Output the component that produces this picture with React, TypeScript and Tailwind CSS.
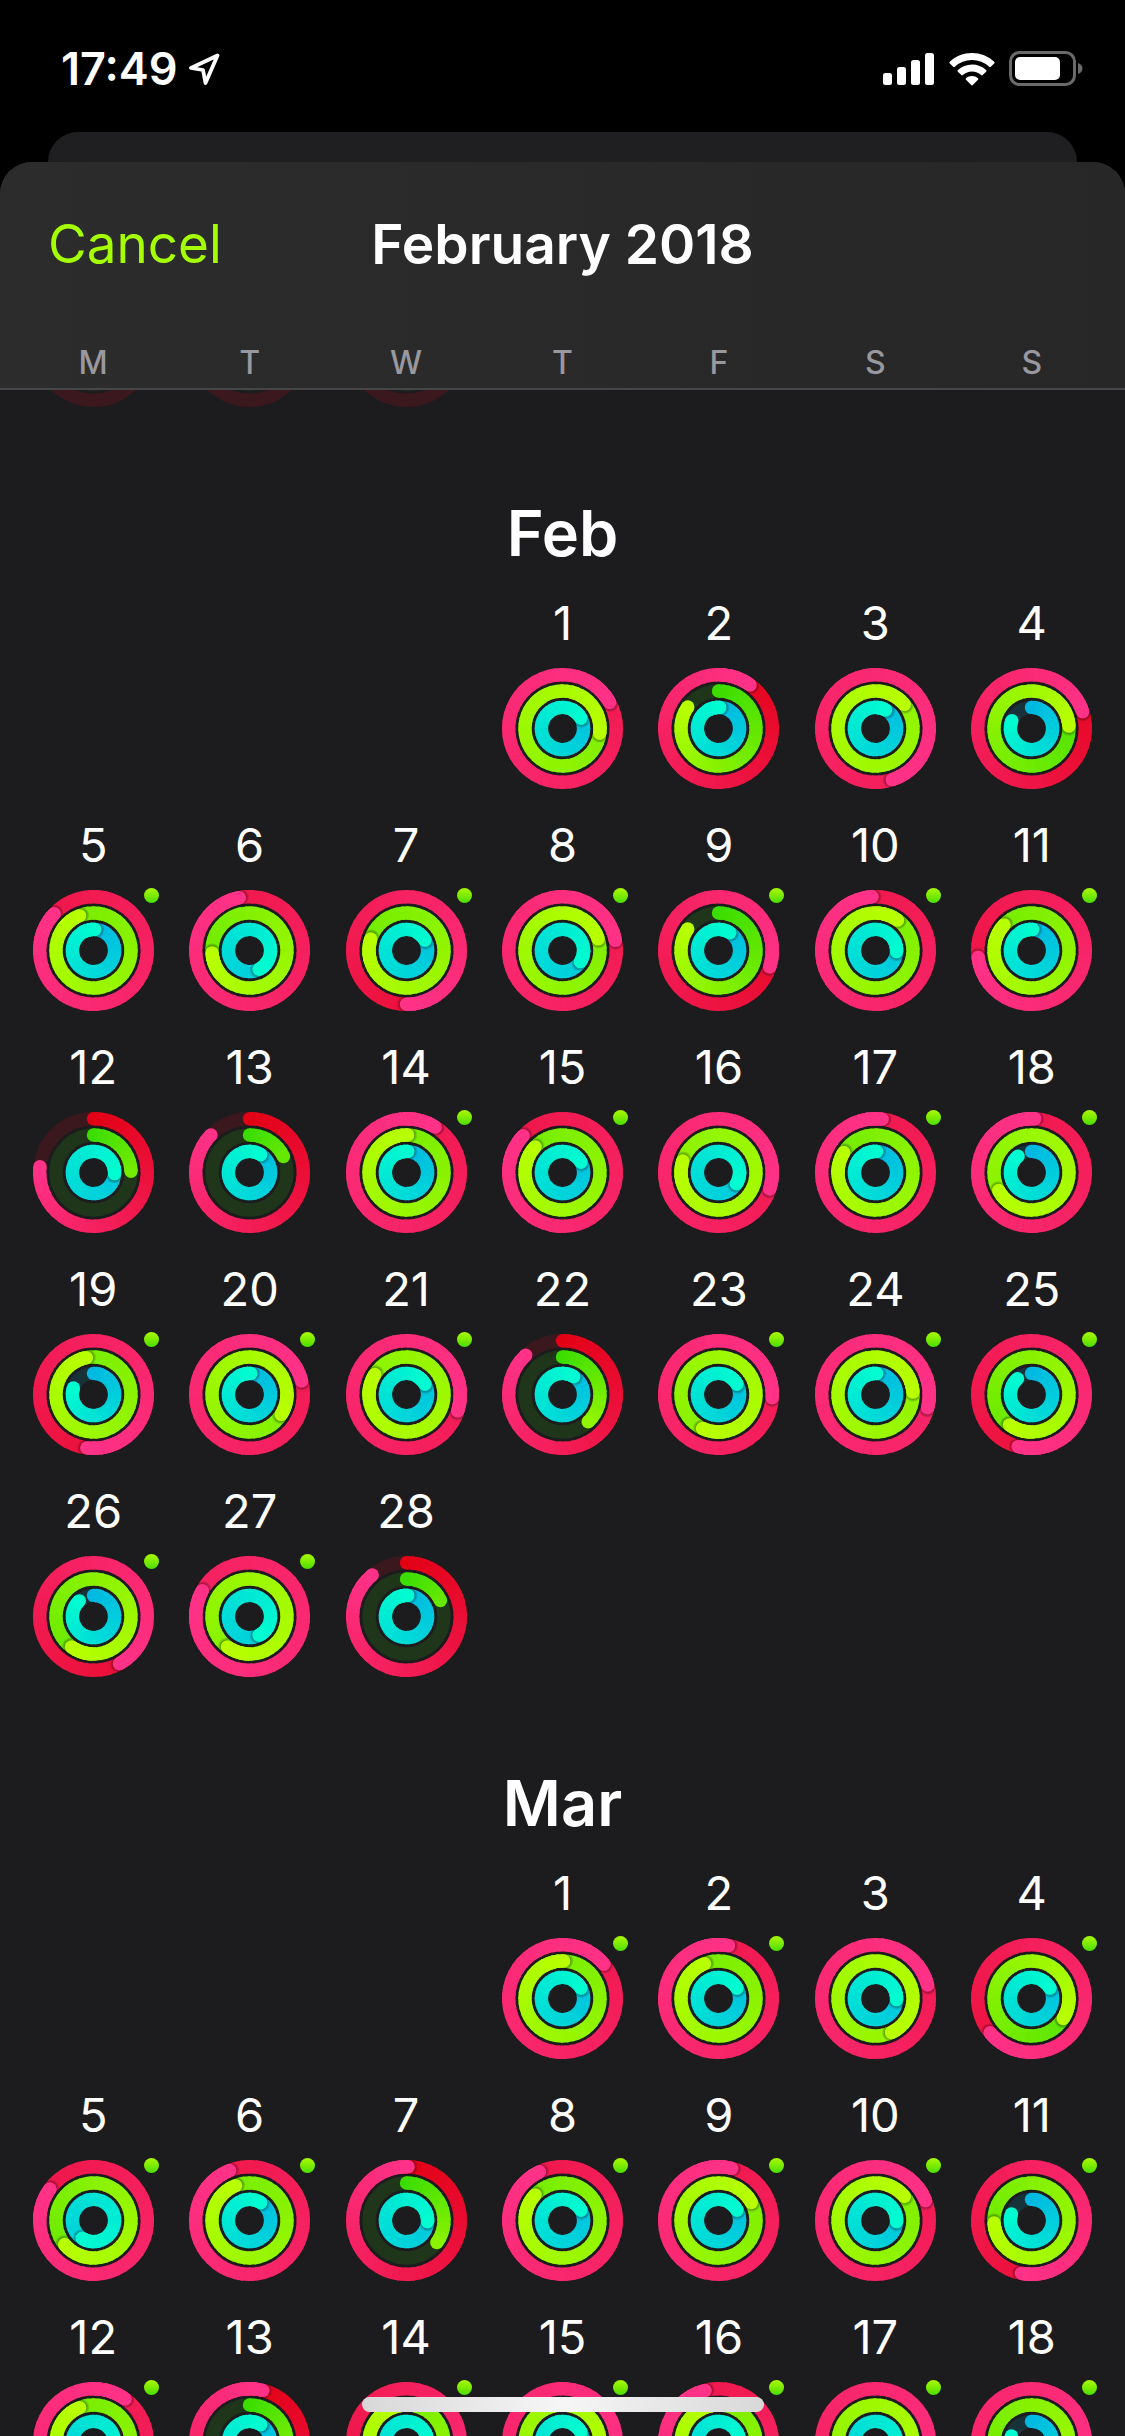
import React from "react";

type Rgb = [number, number, number];

type RingStyle = { radius: number; from: Rgb; to: Rgb; track: string };

/** Completed laps for move, exercise and stand; 1 closes a ring. */
type Day = { move: number; exercise: number; stand: number; workout?: boolean };

type Month = { name: string; days: Day[] };

const STROKE = 13.4;
const CENTER = 60.5;

const MOVE: RingStyle = { radius: 53.8, from: [226, 0, 20], to: [255, 50, 136], track: "#3b181d" };
const EXERCISE: RingStyle = { radius: 37.5, from: [59, 221, 0], to: [184, 255, 0], track: "#20361a" };
const STAND: RingStyle = { radius: 21.1, from: [0, 184, 226], to: [0, 252, 208], track: "#18323a" };

const d = (move: number, exercise: number, stand: number, workout = true): Day => ({
  move,
  exercise,
  stand,
  workout,
});

const MONTHS: Month[] = [
  {
    name: "Feb",
    days: [
      d(2.17, 2.27, 1.17, false),
      d(1.1, 0.847, 1.01, false),
      d(2.45, 3.14, 1.08, false),
      d(1.2, 1.24, 0.81, false),
      d(1.87, 1.94, 1.01),
      d(1.97, 1.74, 1.425, false),
      d(1.5, 1.8, 1.17),
      d(2.22, 2.2, 1.34),
      d(1.3, 0.847, 1.09),
      d(1.99, 2.1, 1.26),
      d(1.73, 1.87, 1.01),
      d(0.767, 0.245, 1.26, false),
      d(0.873, 0.18, 1.09, false),
      d(2.09, 2.005, 1.01),
      d(1.87, 1.87, 1.17),
      d(2.3, 2.8, 1.34, false),
      d(2.02, 1.84, 1.01),
      d(2.01, 2.67, 0.89),
      d(1.52, 1.97, 0.8),
      d(2.21, 2.34, 1.01),
      d(2.3, 2.84, 1.17),
      d(0.88, 0.38, 1.09, false),
      d(2.26, 2.57, 1.17),
      d(3.29, 3.24, 1.01),
      d(1.54, 1.6, 0.885),
      d(1.42, 1.6, 0.883),
      d(2.83, 2.6, 1.425),
      d(0.89, 0.18, 1.01, false),
    ],
  },
  {
    name: "Mar",
    days: [
      d(2.14, 2.005, 1.17),
      d(2.03, 1.94, 1.17),
      d(2.21, 3.43, 1.26, false),
      d(1.64, 1.34, 1.17),
      d(1.85, 1.64, 1.59),
      d(1.94, 1.94, 1.09),
      d(1.005, 0.35, 1.26, false),
      d(1.93, 1.87, 1.17),
      d(2.04, 2.17, 1.17),
      d(2.19, 2.14, 1.26),
      d(1.53, 1.74, 0.8),
      d(2.1, 1.94, 1.5),
      d(1.04, 0.45, 1.09, false),
      d(1.6, 1.98, 1.26),
      d(2.35, 2.4, 1.17),
      d(1.96, 1.99, 1.26),
      d(2.5, 2.5, 1.5),
      d(2.4, 1.65, 0.8),
    ],
  },
];

const WEEKDAYS = ["M", "T", "W", "T", "F", "S", "S"];

/** Rings shorter than this stop part-way along the colour ramp. */
const FULL_RAMP = 0.55;

function point(radius: number, turns: number) {
  const a = turns * 2 * Math.PI;
  return { x: CENTER + radius * Math.sin(a), y: CENTER - radius * Math.cos(a) };
}

function arc(radius: number, from: number, to: number) {
  const a = point(radius, from);
  const b = point(radius, to);
  return `M${a.x.toFixed(2)} ${a.y.toFixed(2)}A${radius} ${radius} 0 0 1 ${b.x.toFixed(2)} ${b.y.toFixed(2)}`;
}

function colourAt(style: RingStyle, value: number, turns: number) {
  const t = Math.min(1, turns / Math.max(value, FULL_RAMP));
  const c = style.from.map((v, i) => Math.round(v + (style.to[i] - v) * t));
  return `rgb(${c[0]} ${c[1]} ${c[2]})`;
}

function Sweep({ style, value, from, to }: { style: RingStyle; value: number; from: number; to: number }) {
  const count = Math.max(1, Math.ceil((to - from) * 48));
  const step = (to - from) / count;
  return (
    <>
      {Array.from({ length: count }, (_, i) => {
        const start = from + i * step;
        const end = start + step;
        return (
          <path
            key={i}
            d={arc(style.radius, start - (i > 0 ? 0.006 : 0), end)}
            stroke={colourAt(style, value, (start + end) / 2)}
            strokeWidth={STROKE}
            fill="none"
          />
        );
      })}
    </>
  );
}

function Ring({ style, value }: { style: RingStyle; value: number }) {
  const tip = point(style.radius, value);
  const shade = point(style.radius, value + 1 / (2 * Math.PI * style.radius));
  const start = point(style.radius, 0);
  return (
    <g>
      <circle cx={CENTER} cy={CENTER} r={style.radius} fill="none" stroke={style.track} strokeWidth={STROKE} />
      {value > 0 && value <= 1 && (
        <circle cx={start.x} cy={start.y} r={STROKE / 2} fill={colourAt(style, value, 0)} />
      )}
      {value > 0 && <Sweep style={style} value={value} from={Math.max(0, value - 1)} to={value} />}
      {value > 1 && (
        <>
          <circle cx={shade.x} cy={shade.y} r={9} fill="url(#tip-shade)" />
          <Sweep style={style} value={value} from={value - 0.1} to={value} />
        </>
      )}
      {value > 0 && <circle cx={tip.x} cy={tip.y} r={STROKE / 2} fill={colourAt(style, value, value)} />}
    </g>
  );
}

function Rings({ day }: { day: Day }) {
  return (
    <svg aria-hidden="true" viewBox="0 0 121 121" className="block size-[121px] shrink-0">
      <Ring style={MOVE} value={day.move} />
      <Ring style={EXERCISE} value={day.exercise} />
      <Ring style={STAND} value={day.stand} />
    </svg>
  );
}

function DayCell({ number, day, column }: { number: number; day: Day; column?: string }) {
  return (
    <button type="button" className={`flex flex-col items-center pb-[26px] ${column ?? ""}`}>
      <span className="text-[47px] leading-[60px]">{number}</span>
      <span className="relative mt-[15px] block">
        <Rings day={day} />
        {day.workout && (
          <span className="absolute -top-[2px] -right-[5px] size-[15px] rounded-full bg-linear-to-b from-[#a8f800] to-[#44de00]" />
        )}
      </span>
    </button>
  );
}

function MonthSection({ month }: { month: Month }) {
  return (
    <section className="pt-[60px]">
      <h2 className="mb-[20px] text-center text-[63px] leading-[80px] font-semibold">{month.name}</h2>
      <div className="grid grid-cols-7">
        {month.days.map((day, i) => (
          <DayCell key={i} number={i + 1} day={day} column={i === 0 ? "col-start-4" : undefined} />
        ))}
      </div>
    </section>
  );
}

function StatusBar() {
  return (
    <div className="flex h-[132px] shrink-0 items-center justify-between pt-[6px] pr-[42px] pl-[61px]">
      <div className="flex items-center gap-[10px]">
        <span className="text-[45px] leading-[54px] font-semibold">17:49</span>
        <svg aria-hidden="true" viewBox="0 0 32 32" className="size-[32px]">
          <path
            d="M29.500 2.500 L3 15 L15 17 L17.500 30 Z"
            fill="none"
            stroke="#fff"
            strokeWidth="3.8"
            strokeLinejoin="round"
          />
        </svg>
      </div>
      <div className="flex items-center gap-[14px]">
        <svg aria-hidden="true" viewBox="0 0 52 34" className="h-[34px] w-[52px]" fill="#fff">
          <rect x="0" y="21" width="9" height="12" rx="2.5" />
          <rect x="14" y="15" width="9" height="18" rx="2.5" />
          <rect x="28" y="8" width="9" height="25" rx="2.5" />
          <rect x="42" y="1" width="9" height="32" rx="2.5" />
        </svg>
        <svg aria-hidden="true" viewBox="0 0 46 34" className="h-[34px] w-[46px]" fill="#fff">
          <path d="M23 1C14.500 1 6.600 4.300 .8 9.800a1.100 1.100 0 0 0 0 1.600l3.400 3.400a1.200 1.200 0 0 0 1.600 0A25 25 0 0 1 23 8a25 25 0 0 1 17.200 6.800 1.200 1.200 0 0 0 1.600 0l3.400-3.400a1.100 1.100 0 0 0 0-1.600A32 32 0 0 0 23 1Z" />
          <path d="M23 12.500c-5.400 0-10.400 2.100-14.100 5.500a1.100 1.100 0 0 0 0 1.700l3.400 3.400a1.200 1.200 0 0 0 1.600 0A13.400 13.400 0 0 1 23 19.500c3.500 0 6.700 1.300 9.100 3.600a1.200 1.200 0 0 0 1.600 0l3.400-3.400a1.100 1.100 0 0 0 0-1.700A20.700 20.700 0 0 0 23 12.500Z" />
          <path d="M23 24c-2.300 0-4.400.8-6 2.200a1.100 1.100 0 0 0 0 1.600l5.200 5.300a1.100 1.100 0 0 0 1.600 0l5.200-5.300a1.100 1.100 0 0 0 0-1.600A9.100 9.100 0 0 0 23 24Z" />
        </svg>
        <svg aria-hidden="true" viewBox="0 0 74 36" className="h-[36px] w-[74px]">
          <rect x="1.500" y="1.500" width="64" height="32" rx="9" fill="none" stroke="#6a6a6a" strokeWidth="3" />
          <rect x="6" y="6" width="45" height="23" rx="5" fill="#fff" />
          <path d="M69 12c3 1 4.500 3 4.500 5.500S72 22 69 23Z" fill="#6a6a6a" />
        </svg>
      </div>
    </div>
  );
}

export default function App() {
  return (
    <div className="relative flex h-screen flex-col overflow-hidden bg-black font-['Inter','Liberation_Sans',sans-serif] text-white">
      <StatusBar />
      <div className="mx-[48px] h-[30px] shrink-0 rounded-t-[30px] bg-[#1f1f21]" />
      <div className="flex min-h-0 flex-1 flex-col overflow-hidden rounded-t-[32px] bg-[#1c1c1e]">
        <header className="shrink-0 border-b-2 border-[#464648] bg-linear-to-r from-[#2c2c2c] to-[#272727]">
          <div className="grid h-[164px] grid-cols-[1fr_auto_1fr] items-center px-[48px]">
            <button type="button" className="justify-self-start text-[53px] leading-[66px] text-[#a6ff00]">
              Cancel
            </button>
            <h1 className="text-[55px] leading-[66px] font-semibold">February 2018</h1>
          </div>
          <div className="grid h-[62px] grid-cols-7 px-[15px] pt-[17px] text-center text-[32px] leading-[40px] font-medium text-[#98989e]">
            {WEEKDAYS.map((label, i) => (
              <span key={i}>{label}</span>
            ))}
          </div>
        </header>
        <main className="min-h-0 flex-1 overflow-hidden px-[15px]">
          <div className="mb-[26px] grid h-[17px] grid-cols-7 overflow-hidden">
            {[29, 30, 31].map((n) => (
              <div key={n} className="flex h-[17px] items-end justify-center">
                <Rings day={{ move: 0, exercise: 0, stand: 0 }} />
              </div>
            ))}
          </div>
          {MONTHS.map((month) => (
            <MonthSection key={month.name} month={month} />
          ))}
        </main>
      </div>
      <div className="absolute bottom-[24px] left-1/2 h-[15px] w-[402px] -translate-x-1/2 rounded-full bg-linear-to-r from-[#d8d8d8] via-[#f6f6f6] to-[#d8d8d8]" />
      <svg aria-hidden="true" className="absolute size-0">
        <defs>
          <radialGradient id="tip-shade">
            <stop offset="0.6" stopColor="#000" stopOpacity="0.4" />
            <stop offset="1" stopColor="#000" stopOpacity="0" />
          </radialGradient>
        </defs>
      </svg>
    </div>
  );
}
